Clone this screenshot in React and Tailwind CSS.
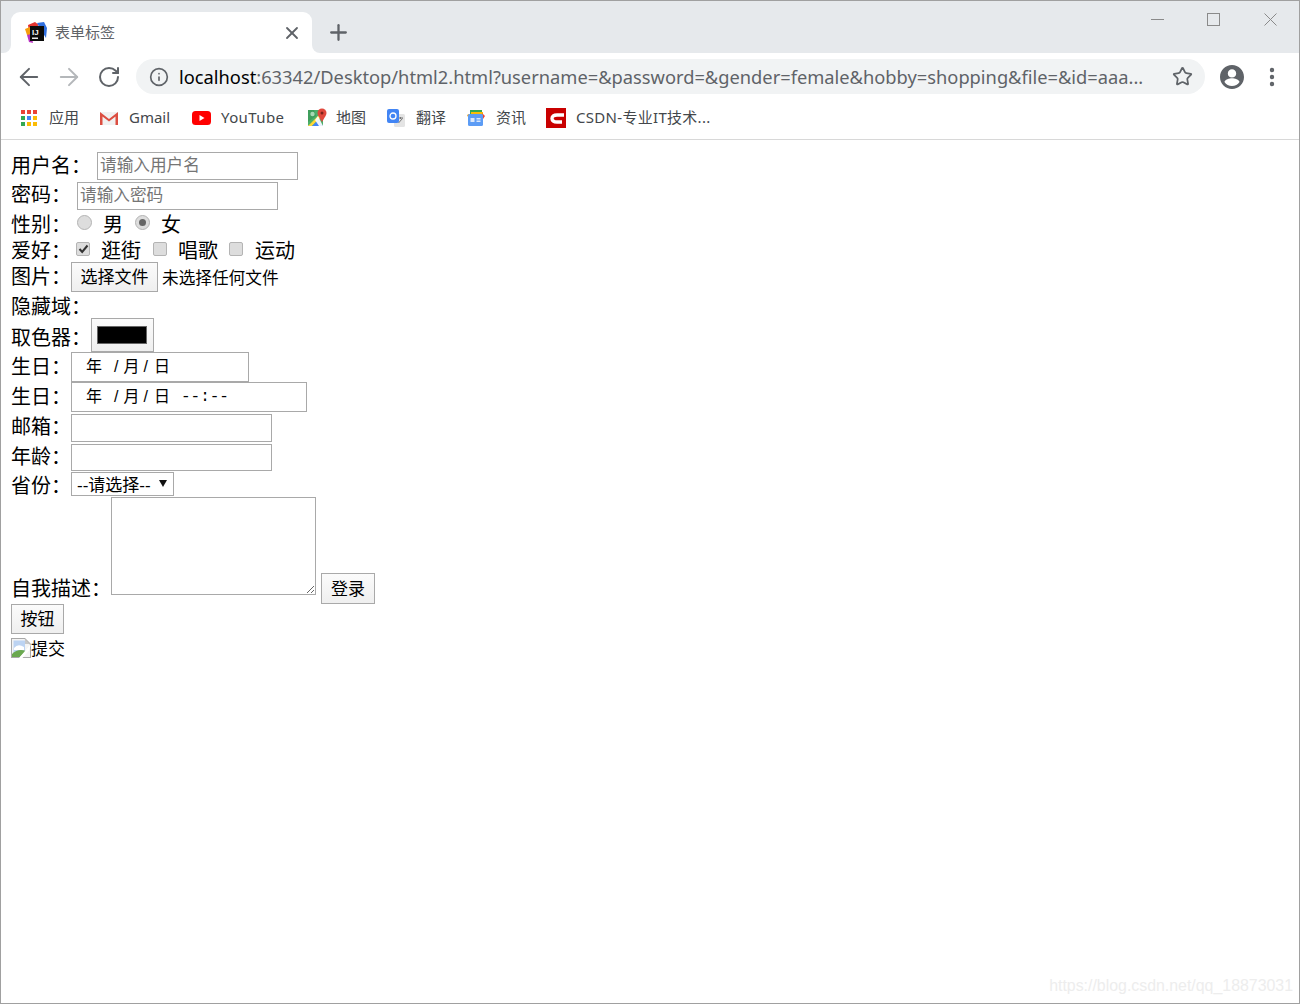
import { ArrowLeft, ArrowRight, Info, MoreVertical, Plus, RotateCw, Star, X } from 'lucide-react'

const UI_FONT = "font-['Noto_Sans','Noto_Sans_CJK_SC',sans-serif]"
const PAGE_FONT = "font-['Liberation_Sans','Noto_Sans_CJK_SC',sans-serif]"

function IdeaIcon() {
  return (
    <svg width="22" height="21" viewBox="0 0 22 21" className="shrink-0">
      <path d="M3 3 L10 0 L14 3 L4 10 Z" fill="#e3342f" />
      <path d="M12 1 L19 0 L22 6 L21 16 L16 8 Z" fill="#2f6fe0" />
      <path d="M0 7 L5 5 L5 13 L2 13 Z" fill="#f59e0b" />
      <path d="M2 13 L6 12 L8 21 L4 20 Z" fill="#b832c0" />
      <rect x="5" y="4" width="14" height="15" fill="#0a0a0a" />
      <rect x="7" y="15.5" width="6" height="1.5" fill="#e8e8e8" />
      <text x="7" y="12.5" fontSize="8" fontWeight="700" fill="#f5f5f5" fontFamily="Liberation Sans">IJ</text>
    </svg>
  )
}

function AppsIcon() {
  const colors = ['#ea4335', '#ea4335', '#ea4335', '#34a853', '#4285f4', '#fbbc05', '#34a853', '#fbbc05', '#fbbc05']
  return (
    <span className="grid grid-cols-3 gap-[2px] w-[16px] shrink-0">
      {colors.map((c, i) => (
        <span key={i} className="w-[4px] h-[4px]" style={{ backgroundColor: c }} />
      ))}
    </span>
  )
}

function GmailIcon() {
  return (
    <svg width="20" height="16" viewBox="0 0 20 16" className="shrink-0">
      <rect x="1" y="2" width="18" height="13" fill="#f1f1f1" />
      <path d="M1 15 V2 L10 9 L19 2 V15 H16.5 V6.5 L10 11.5 L3.5 6.5 V15 Z" fill="#dc4e41" />
    </svg>
  )
}

function YoutubeIcon() {
  return (
    <svg width="19" height="14" viewBox="0 0 19 14" className="shrink-0">
      <rect width="19" height="14" rx="3.5" fill="#f00" />
      <path d="M7.5 4 L12.5 7 L7.5 10 Z" fill="#fff" />
    </svg>
  )
}

function MapsIcon() {
  return (
    <svg width="19" height="19" viewBox="0 0 19 19" className="shrink-0">
      <rect x="0" y="2" width="15" height="16" rx="1" fill="#4caf6a" />
      <path d="M0 2 H6 L8 8 L0 14 Z" fill="#3f9e5c" />
      <circle cx="4.5" cy="6" r="2.2" fill="#a8d8b4" />
      <path d="M0 18 L11 7 L13 9 L4 18 Z" fill="#fdd835" />
      <path d="M4 18 L10 12 L15 18 Z" fill="#4285f4" />
      <path d="M10 8 L15 18 H11 L7 12 Z" fill="#fff" opacity="0.9" />
      <circle cx="14" cy="5" r="4.5" fill="#e0483c" />
      <path d="M10.2 7.5 L14 14 L17.8 7.5 Z" fill="#e0483c" />
      <circle cx="14" cy="5" r="1.5" fill="#7d231b" />
    </svg>
  )
}

function TranslateIcon() {
  return (
    <svg width="18" height="18" viewBox="0 0 18 18" className="shrink-0">
      <rect x="7" y="5" width="11" height="13" rx="1.5" fill="#e4e4e4" />
      <path d="M11 9 H16 M13.5 8 V10 M11.5 14 L15.5 9.5" stroke="#777" strokeWidth="1" fill="none" />
      <rect x="0" y="0" width="12" height="14" rx="2" fill="#4285f4" />
      <circle cx="6" cy="7" r="3" fill="none" stroke="#fff" strokeWidth="1.3" />
    </svg>
  )
}

function NewsIcon() {
  return (
    <svg width="18" height="16" viewBox="0 0 18 16" className="shrink-0">
      <path d="M3 0 H15 V5 H3 Z" fill="#34a853" />
      <path d="M4 2 H16 V5 H4 Z" fill="#fbbc05" />
      <path d="M15 3 L18 6 L16 9 Z" fill="#ea4335" />
      <path d="M0 5 L2 4 L2 9 Z" fill="#f59e0b" />
      <rect x="1" y="4" width="15" height="12" rx="1.5" fill="#5c9cf5" />
      <rect x="3.5" y="8" width="4" height="4" fill="#dbe8fb" />
      <rect x="9.5" y="8" width="4" height="1.5" fill="#dbe8fb" />
      <rect x="9.5" y="10.5" width="4" height="1.5" fill="#dbe8fb" />
    </svg>
  )
}

function CsdnIcon() {
  return (
    <svg width="20" height="20" viewBox="0 0 20 20" className="shrink-0">
      <rect width="20" height="20" fill="#c90000" />
      <path d="M18 7 H11 Q6 7 6 10.5 Q6 14 11 14 H16" fill="none" stroke="#fff" strokeWidth="3.4" />
    </svg>
  )
}

function Bookmark({ icon, label, className }) {
  return (
    <span className={`flex items-center text-[#43474b] text-[15px] whitespace-nowrap shrink-0 ${className}`}>
      {icon}
      <span>{label}</span>
    </span>
  )
}

function BrokenImageIcon() {
  return (
    <svg width="20" height="20" viewBox="0 0 20 20" className="shrink-0">
      <path d="M0 0 H14 L20 6 V20 H0 Z" fill="#a8a8a8" />
      <path d="M1 1 H13.5 L19 6.5 V19 H1 Z" fill="#f4f4f4" />
      <path d="M2.5 2.5 H14 V15 H2.5 Z" fill="#bcd3f2" />
      <path d="M3 10 Q7 5 13 9 L13 12 H3 Z" fill="#fff" />
      <path d="M1 19 L1 16 Q7 10 15 13 L9 19 Z" fill="#6aa84f" />
      <path d="M14 1 L19 6 H14 Z" fill="#c8c8c8" />
      <path d="M20 6 L8 20 H11.5 L18 12.5 Z" fill="#fff" />
    </svg>
  )
}

function Radio({ checked }) {
  return (
    <span className="w-[15px] h-[15px] mb-[3px] rounded-full border border-[#b4b4b4] bg-[#dddddd] flex items-center justify-center shrink-0">
      {checked && <span className="w-[7px] h-[7px] rounded-full bg-[#666666]" />}
    </span>
  )
}

function Check({ checked }) {
  return (
    <span className="w-[14px] h-[14px] mb-[3px] rounded-[2px] border border-[#b4b4b4] bg-[#dddddd] flex items-center justify-center shrink-0">
      {checked && (
        <svg width="11" height="10" viewBox="0 0 11 10">
          <path d="M1.5 5 L4.2 8 L9.5 1.5" fill="none" stroke="#333" strokeWidth="2" />
        </svg>
      )}
    </span>
  )
}

function DateText() {
  return (
    <>
      <span>年</span>
      <span className="ml-[12px]">/</span>
      <span className="ml-[5px]">月</span>
      <span className="ml-[4px]">/</span>
      <span className="ml-[6px]">日</span>
    </>
  )
}

const inputCls = 'border border-[#a9a9a9] bg-white px-[2px] text-[16.67px] placeholder:text-[#757575] outline-none'
const btnCls = 'border border-[#a9a9a9] bg-gradient-to-b from-[#fbfbfb] to-[#efefef] text-black text-[17px] flex items-center justify-center'
const dateCls = 'h-[30px] border border-[#a9a9a9] pl-[14px] text-[16px] flex items-center whitespace-pre'

export default function App() {
  return (
    <div className={`w-[1300px] h-[1004px] relative overflow-hidden bg-white border border-[#a0a0a0] ${UI_FONT}`}>
      {/* tab strip */}
      <div className="h-[52px] bg-[#e6e9ec] flex items-end pl-[10px]">
        <div className="relative w-[301px] h-[41px] bg-white rounded-t-[9px] flex items-center pl-[14px] pr-[10px]">
          <span className="absolute left-[-8px] bottom-0 w-[8px] h-[8px] bg-white">
            <span className="block w-full h-full bg-[#e6e9ec] rounded-br-[8px]" />
          </span>
          <span className="absolute right-[-8px] bottom-0 w-[8px] h-[8px] bg-white">
            <span className="block w-full h-full bg-[#e6e9ec] rounded-bl-[8px]" />
          </span>
          <IdeaIcon />
          <span className="ml-[8px] text-[15px] text-[#5f6368]">表单标签</span>
          <X size={20} strokeWidth={2.2} className="ml-auto text-[#5f6368] shrink-0" />
        </div>
        <Plus size={25} strokeWidth={2.2} className="ml-[14px] mb-[8px] text-[#5f6368] shrink-0" />
        <div className="ml-auto self-start flex items-start">
          <span className="w-[13px] h-px mt-[18px] bg-[#8a8a8a]" />
          <span className="w-[13px] h-[13px] ml-[43px] mt-[12px] border border-[#8a8a8a]" />
          <svg width="13" height="13" viewBox="0 0 13 13" className="ml-[44px] mr-[22px] mt-[12px]">
            <path d="M0.5 0.5 L12.5 12.5 M12.5 0.5 L0.5 12.5" stroke="#8a8a8a" strokeWidth="1" />
          </svg>
        </div>
      </div>

      {/* toolbar */}
      <div className="h-[47px] flex items-center text-[#5f6368]">
        <ArrowLeft size={28} strokeWidth={1.7} className="ml-[14px] shrink-0" />
        <ArrowRight size={28} strokeWidth={1.7} className="ml-[12px] text-[#b4b7ba] shrink-0" />
        <RotateCw size={24} strokeWidth={2} className="ml-[14px] shrink-0" />
        <div className="ml-[15px] w-[1069px] h-[35px] shrink-0 rounded-full bg-[#f1f3f4] flex items-center pl-[13px]">
          <Info size={20} strokeWidth={2} className="shrink-0" />
          <span className="ml-[10px] text-[18.3px] whitespace-nowrap">
            <span className="text-black">localhost</span>:63342/Desktop/html2.html?username=&amp;password=&amp;gender=female&amp;hobby=shopping&amp;file=&amp;id=aaa...
          </span>
          <Star size={21} strokeWidth={2} className="ml-auto mr-[12px] shrink-0" />
        </div>
        <svg width="24" height="24" viewBox="0 0 24 24" className="ml-[15px] shrink-0" fill="#5f6368">
          <path d="M12 0C5.4 0 0 5.4 0 12s5.4 12 12 12 12-5.4 12-12S18.6 0 12 0zm0 4.2c2.3 0 4.2 1.9 4.2 4.2s-1.9 4.2-4.2 4.2-4.2-1.9-4.2-4.2S9.7 4.2 12 4.2zm0 16.8c-3.1 0-5.9-1.6-7.5-4 .1-2.5 5-3.8 7.5-3.8s7.4 1.3 7.5 3.8c-1.6 2.4-4.4 4-7.5 4z" />
        </svg>
        <MoreVertical size={24} strokeWidth={2.4} className="ml-[16px] shrink-0" />
      </div>

      {/* bookmarks */}
      <div className="h-[35px] pb-[4px] box-content flex items-center border-b border-[#d8d8d8]">
        <Bookmark className="ml-[20px] w-[78px] gap-[12px]" icon={<AppsIcon />} label="应用" />
        <Bookmark className="w-[93px] gap-[10px]" icon={<GmailIcon />} label="Gmail" />
        <Bookmark className="w-[116px] gap-[10px] tracking-[0.4px]" icon={<YoutubeIcon />} label="YouTube" />
        <Bookmark className="w-[79px] gap-[9px]" icon={<MapsIcon />} label="地图" />
        <Bookmark className="w-[80px] gap-[11px]" icon={<TranslateIcon />} label="翻译" />
        <Bookmark className="w-[79px] gap-[11px]" icon={<NewsIcon />} label="资讯" />
        <Bookmark className="gap-[10px] tracking-[0.3px]" icon={<CsdnIcon />} label="CSDN-专业IT技术..." />
      </div>

      {/* form */}
      <form className={`pl-[10px] pt-[12px] text-[20px] text-black ${PAGE_FONT}`}>
        <div className="h-[28px] flex items-center">
          <span className="mr-[6px]">用户名：</span>
          <input className={`${inputCls} w-[201px] h-[28px]`} placeholder="请输入用户名" />
        </div>
        <div className="h-[28px] mt-[2px] flex items-center">
          <span className="mr-[6px] mb-[2px]">密码：</span>
          <input className={`${inputCls} w-[201px] h-[28px]`} placeholder="请输入密码" />
        </div>
        <div className="h-[28px] flex items-center">
          <span className="mr-[6px] mt-[2px]">性别：</span>
          <Radio />
          <span className="ml-[11px] mt-[2px]">男</span>
          <span className="ml-[12px]"><Radio checked /></span>
          <span className="ml-[11px] mt-[2px]">女</span>
        </div>
        <div className="h-[24px] flex items-center">
          <span className="mr-[5px] mt-[2px]">爱好：</span>
          <Check checked />
          <span className="ml-[11px] mt-[2px]">逛街</span>
          <span className="ml-[12px]"><Check /></span>
          <span className="ml-[11px] mt-[2px]">唱歌</span>
          <span className="ml-[11px]"><Check /></span>
          <span className="ml-[12px] mt-[2px]">运动</span>
        </div>
        <div className="h-[30px] flex items-center">
          <span>图片：</span>
          <span className={`${btnCls} w-[87px] h-[30px] pt-[2px] text-[16.67px]`}>选择文件</span>
          <span className="ml-[4px] mt-[2px] text-[16.67px]">未选择任何文件</span>
        </div>
        <div className="h-[26px] flex items-center pt-[4px]">隐藏域：</div>
        <div className="h-[34px] flex items-center">
          <span className="mt-[6px]">取色器：</span>
          <span className={`${btnCls} w-[63px] h-[34px]`}>
            <span className="w-[50px] h-[18px] mr-[2px] mb-[1px] bg-black border border-[#666666]" />
          </span>
        </div>
        <div className="h-[30px] flex items-center">
          <span>生日：</span>
          <span className={`${dateCls} w-[178px]`}><DateText /></span>
        </div>
        <div className="h-[30px] flex items-center">
          <span>生日：</span>
          <span className={`${dateCls} w-[236px]`}>
            <DateText />
            <span className="ml-[11px] font-['Liberation_Mono',monospace]">--:--</span>
          </span>
        </div>
        <div className="h-[28px] mt-[2px] flex items-center">
          <span className="mb-[2px]">邮箱：</span>
          <input className={`${inputCls} w-[201px] h-[28px]`} />
        </div>
        <div className="h-[28px] mt-[2px] flex items-start">
          <span className="leading-[27px]">年龄：</span>
          <input className={`${inputCls} w-[201px] h-[27px]`} />
        </div>
        <div className="h-[25px] flex items-start">
          <span className="leading-[29px]">省份：</span>
          <span className="w-[103px] h-[24px] border border-[#a9a9a9] flex items-center pl-[5px] pt-[3px] text-[17px] whitespace-nowrap">
            --请选择--
            <svg width="8" height="7" viewBox="0 0 8 7" className="ml-[8px] mb-[5px] shrink-0">
              <path d="M0 0 H8 L4 7 Z" fill="#111" />
            </svg>
          </span>
        </div>
        <div className="h-[107px] flex items-start">
          <span className="self-end">自我描述：</span>
          <textarea className="w-[205px] h-[98px] border border-[#a9a9a9] outline-none" />
          <span className={`${btnCls} self-end ml-[5px] w-[54px] h-[31px] pt-[2px]`}>登录</span>
        </div>
        <div className="h-[30px] flex items-center">
          <span className={`${btnCls} w-[53px] h-[30px] pt-[2px]`}>按钮</span>
        </div>
        <div className="h-[20px] mt-[4px] flex items-center text-[17px]">
          <BrokenImageIcon />
          <span className="mt-[3px]">提交</span>
        </div>
      </form>

      <span className="absolute right-[6px] bottom-[5px] text-[15.9px] text-[#ededed] font-['Liberation_Sans',sans-serif]">
        https://blog.csdn.net/qq_18873031
      </span>
    </div>
  )
}
